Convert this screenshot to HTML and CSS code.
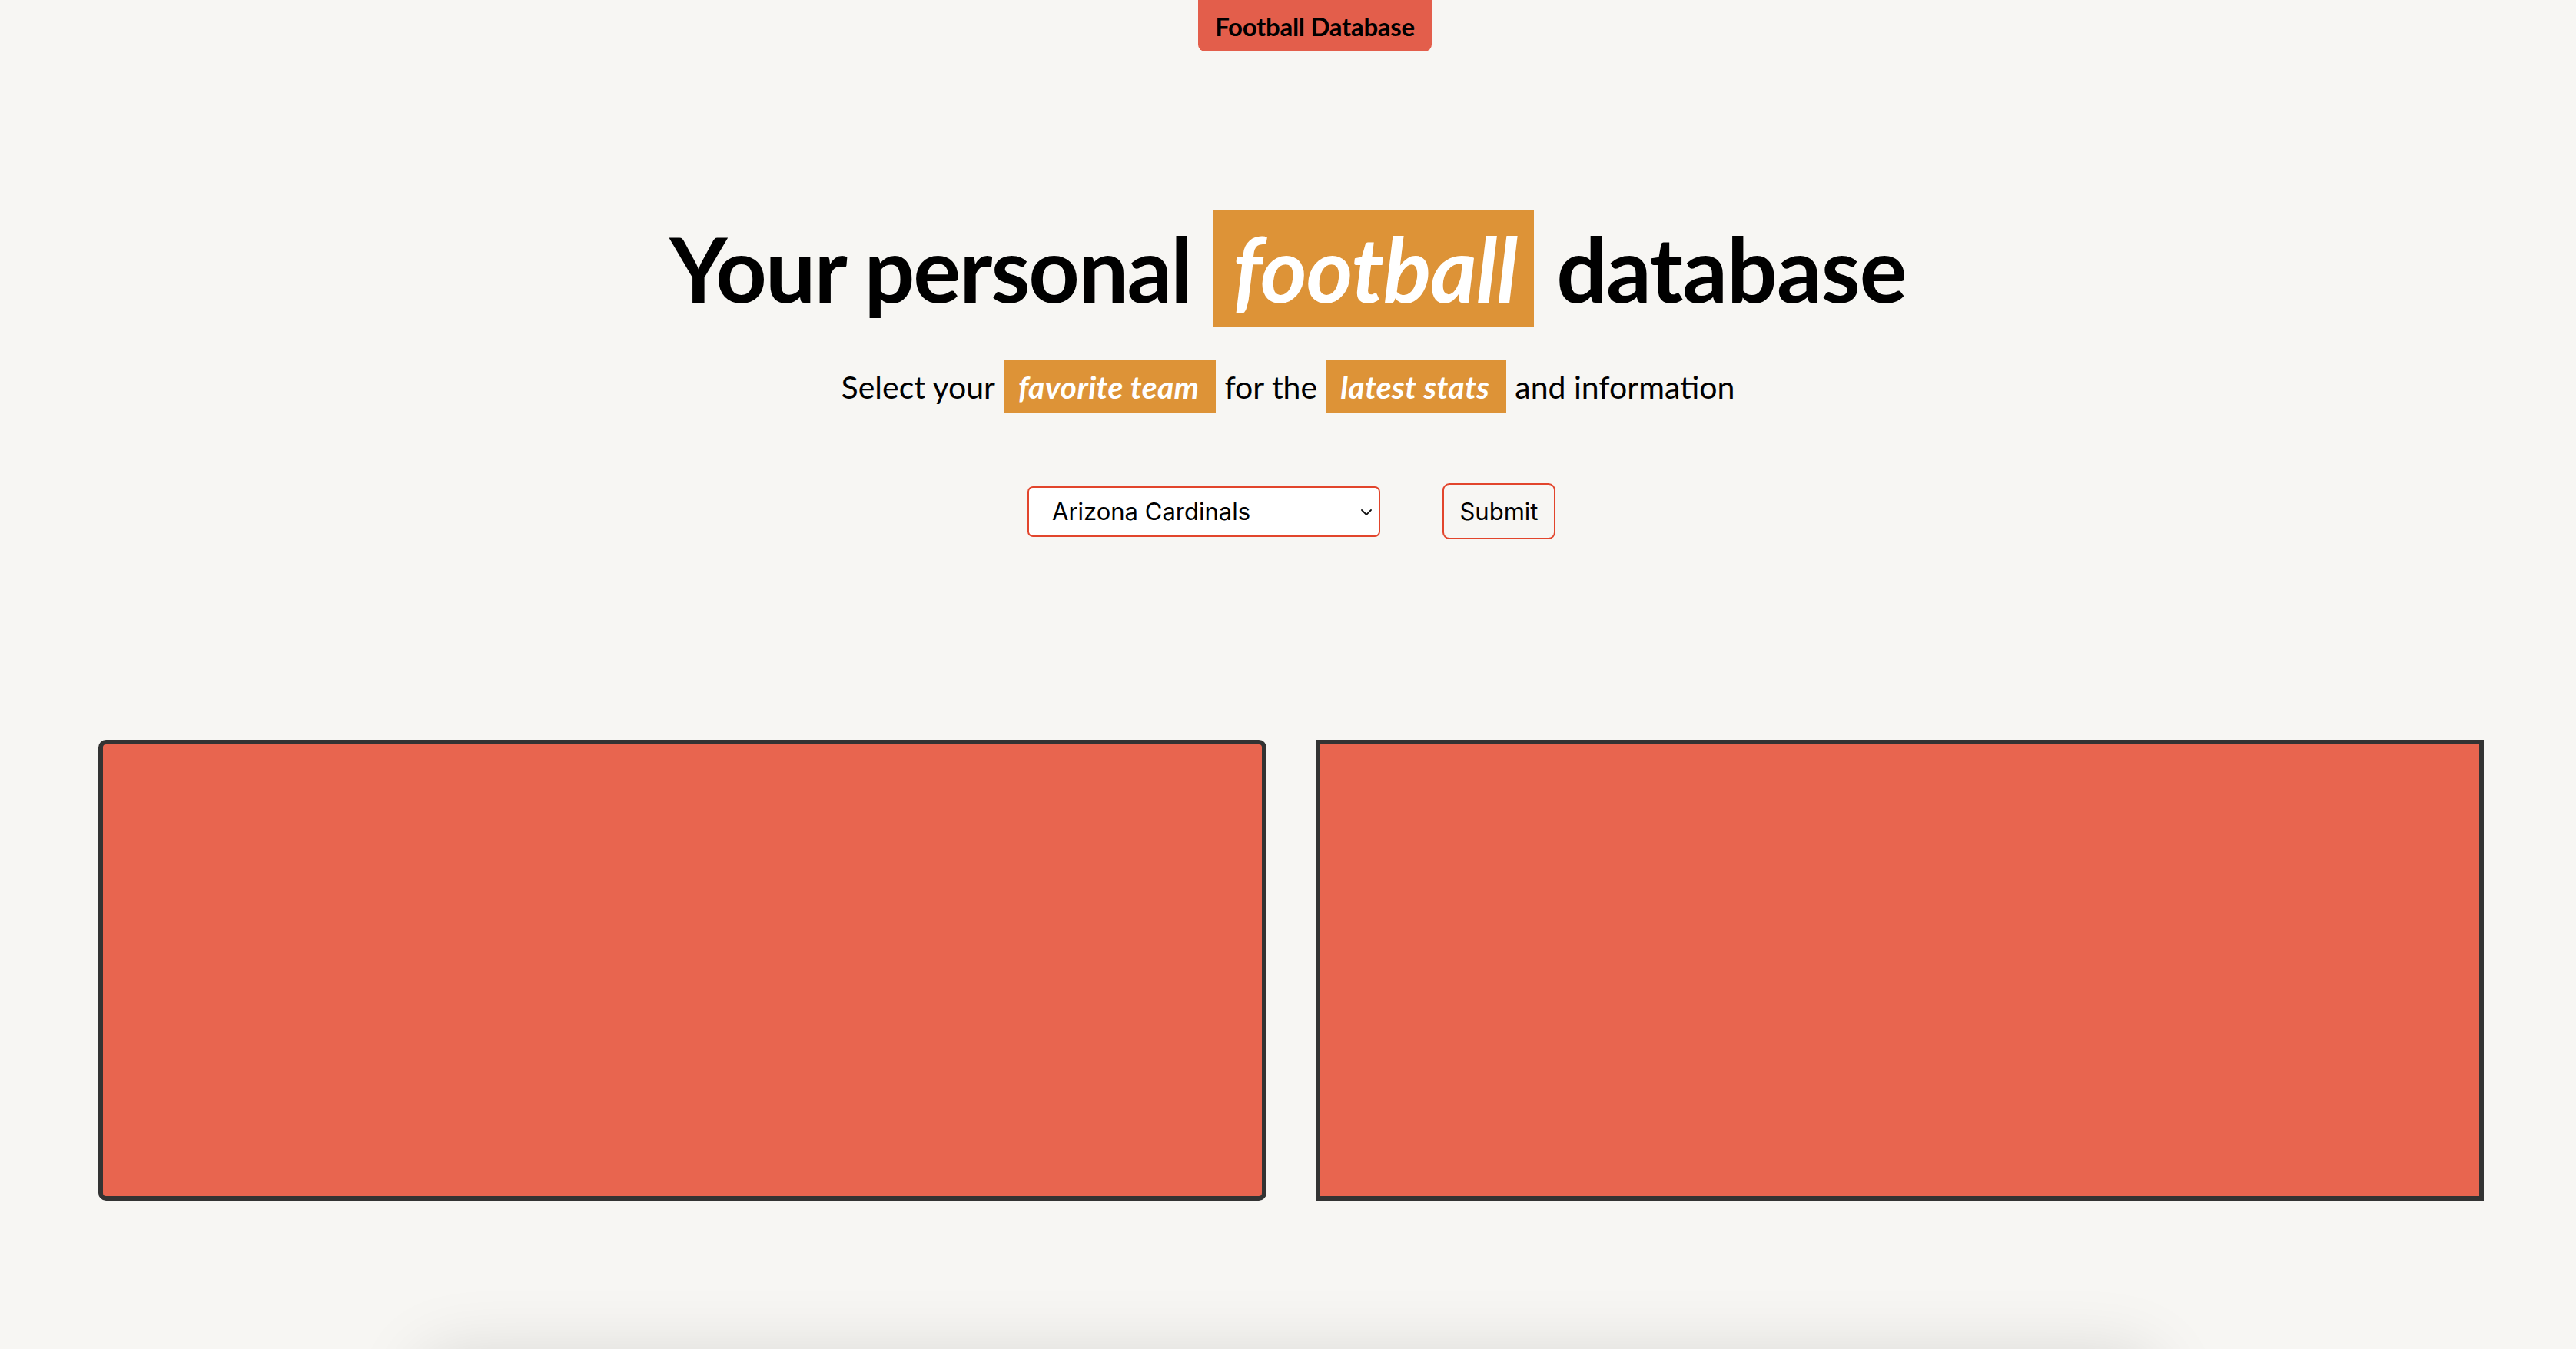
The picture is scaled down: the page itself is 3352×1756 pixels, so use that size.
FILE: index.html
```html
<!DOCTYPE html>
<html lang="en">
<head>
<meta charset="utf-8">
<title>Football Database</title>
<link rel="stylesheet" href="styles.css">
</head>
<body>
<div class="page">
  <header class="topbar">
    <div class="brand">Football Database</div>
  </header>
  <main class="hero">
    <h1 class="title"><span class="t-left">Your personal</span><span class="hl hl-big">football</span><span>database</span></h1>
    <p class="subtitle"><span>Select your</span><span class="hl hl-small">favorite team</span><span>for the</span><span class="hl hl-small">latest stats</span><span>and information</span></p>
    <form class="picker">
      <div class="select-wrap">
        <select class="team-select">
          <option>Arizona Cardinals</option>
          <option>Atlanta Falcons</option>
          <option>Baltimore Ravens</option>
        </select>
        <svg class="chevron" width="16" height="10" viewBox="0 0 16 10"><path d="M2 2 L8 8 L14 2" fill="none" stroke="#111" stroke-width="1.8" stroke-linecap="round" stroke-linejoin="round"/></svg>
      </div>
      <button type="button" class="submit">Submit</button>
    </form>
  </main>
  <section class="cards">
    <div class="card card-left"></div>
    <div class="card card-right"></div>
  </section>
  <footer class="bottom-panel"></footer>
</div>
</body>
</html>
```
FILE: styles.css
```css
html, body {
  margin: 0;
  padding: 0;
  height: 100%;
  overflow: hidden;
}
body {
  background: #f7f6f3;
  font-family: "Lato", "Noto Sans", sans-serif;
  color: #000;
}
.page {
  display: flex;
  flex-direction: column;
}
.topbar {
  display: flex;
  justify-content: center;
  padding-left: 70px;
}
.brand {
  background: #e35e4b;
  color: #000;
  font-weight: 700;
  font-size: 33px;
  width: 304px;
  height: 67px;
  box-sizing: border-box;
  display: flex;
  align-items: center;
  justify-content: center;
  border-radius: 0 0 9px 9px;
  letter-spacing: -0.3px;
}
.hero {
  display: flex;
  flex-direction: column;
  align-items: center;
}
.title {
  margin: 207px 0 0;
  display: flex;
  align-items: center;
  gap: 29px;
  font-size: 116px;
  font-weight: 700;
  letter-spacing: -1px;
  line-height: 1;
}
.t-left {
  letter-spacing: -2px;
}
.hl {
  background: #dd9337;
  color: #fff;
  font-style: italic;
  display: flex;
  align-items: center;
  box-sizing: border-box;
}
.hl-big {
  height: 152px;
  padding: 0 22px 0 25px;
}
.subtitle {
  margin: 43px 0 0;
  display: flex;
  align-items: center;
  gap: 11px;
  font-size: 41px;
  font-weight: 400;
  line-height: 1;
  letter-spacing: 0;
}
.hl-small {
  height: 68px;
  padding: 0 22px 0 19px;
  font-weight: 700;
  letter-spacing: 0.3px;
}
.picker {
  margin: 92px 0 0 9px;
  display: flex;
  align-items: center;
  gap: 81px;
}
.select-wrap {
  position: relative;
}
.team-select {
  appearance: none;
  -webkit-appearance: none;
  width: 459px;
  height: 66px;
  box-sizing: border-box;
  border: 2px solid #e2452c;
  border-radius: 7px;
  background: #fff;
  padding: 0 40px 0 30px;
  font-family: "Inter", "Liberation Sans", sans-serif;
  font-size: 31px;
  color: #000;
  outline: none;
}
.chevron {
  position: absolute;
  right: 10px;
  top: 29px;
  pointer-events: none;
}
.submit {
  width: 147px;
  height: 73px;
  box-sizing: border-box;
  border: 2px solid #e2452c;
  border-radius: 9px;
  background: #f7f6f3;
  font-family: "Inter", "Liberation Sans", sans-serif;
  font-size: 31px;
  color: #000;
  padding: 0;
}
.cards {
  margin: 261px 120px 0 128px;
  display: grid;
  grid-template-columns: 1fr 1fr;
  gap: 64px;
}
.card {
  height: 600px;
  box-sizing: border-box;
  background: #e8654f;
  border: 6px solid #333333;
}
.card-left {
  border-radius: 10px;
}
.card-right {
  border-radius: 0;
}
.bottom-panel {
  margin: 205px auto 0;
  width: 2260px;
  height: 300px;
  background: #f7f6f3;
  border-radius: 40px;
  box-shadow: 0 -6px 90px rgba(0, 0, 0, 0.13);
}
```
